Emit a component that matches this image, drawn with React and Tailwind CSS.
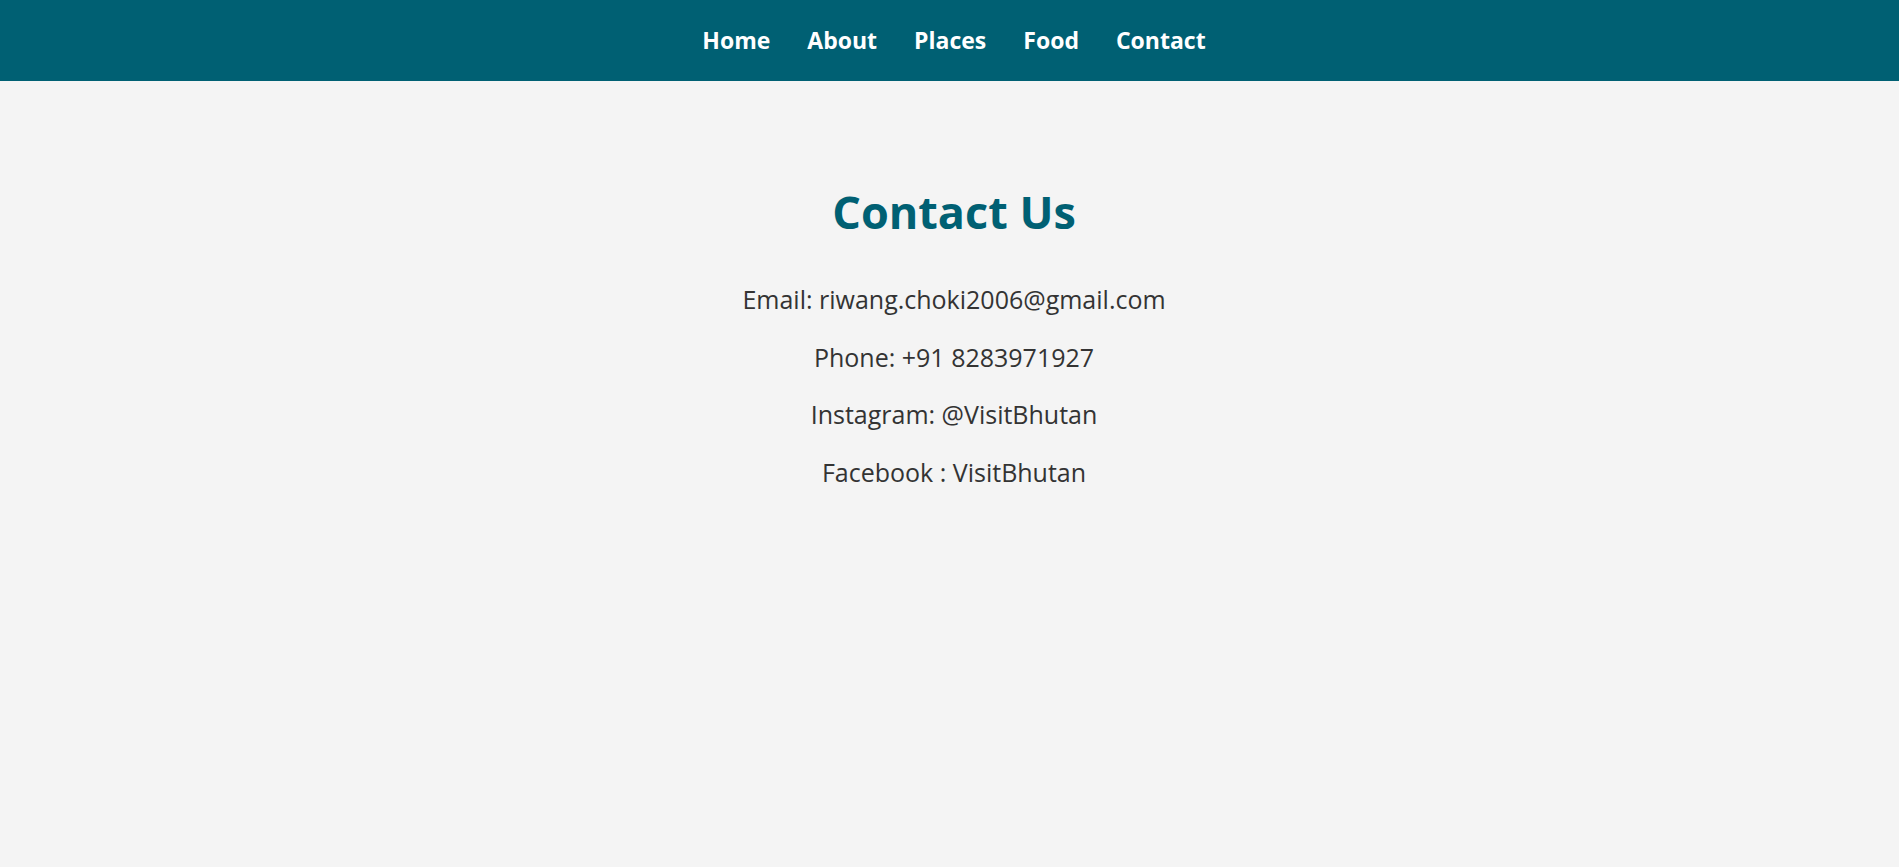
import React from 'react';

const links = ['Home', 'About', 'Places', 'Food', 'Contact'];

const contactLines = [
  'Email: riwang.choki2006@gmail.com',
  'Phone: +91 8283971927',
  'Instagram: @VisitBhutan',
  'Facebook : VisitBhutan',
];

const App = () => {
  return (
    <div className="min-h-screen bg-[#f4f4f4] text-[#333333] font-['Segoe_UI','Open_Sans',sans-serif]">
      {/* Navbar */}
      <nav className="h-[81px] bg-[#006073] flex items-center justify-center pl-[9px]">
        <ul className="flex gap-[37px]">
          {links.map(link => (
            <li key={link}>
              <a href="#" className="text-white font-bold text-[23px]">
                {link}
              </a>
            </li>
          ))}
        </ul>
      </nav>

      {/* Contact section */}
      <section className="pt-[108px] pl-[9px] text-center">
        <h1 className="text-[45px] font-bold text-[#006073] leading-none mb-[48px]">Contact Us</h1>
        <div className="flex flex-col gap-[23px]">
          {contactLines.map(line => (
            <p key={line} className="text-[25px] leading-[34.5px]">{line}</p>
          ))}
        </div>
      </section>
    </div>
  );
};

export default App;
